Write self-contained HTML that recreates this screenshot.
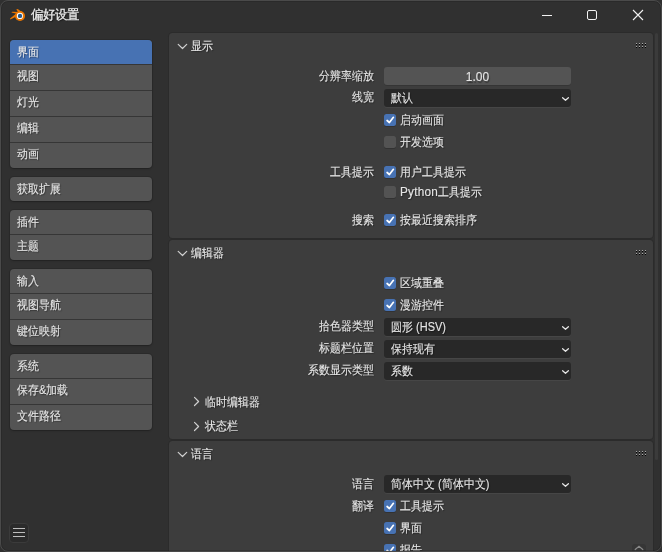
<!DOCTYPE html>
<html><head><meta charset="utf-8">
<style>
*{margin:0;padding:0;box-sizing:border-box}
html,body{width:662px;height:552px;overflow:hidden;background:#303030}
body{position:relative;-webkit-text-stroke:0.1px currentColor;font-family:"Liberation Sans",sans-serif;font-size:11px;line-height:13px;color:#e6e6e6}
#root{position:absolute;left:0;top:0;width:662px;height:552px;overflow:hidden;background:#303030;will-change:transform}
.a{position:absolute;white-space:nowrap}
.t{text-shadow:1px 1px 1px rgba(0,0,0,.45)}
#frame{position:absolute;left:0;top:0;width:662px;height:552px;border:1px solid #4a4a4a;border-radius:8px;pointer-events:none;box-shadow:inset 0 0 0 1px rgba(0,0,0,.12)}
.grp{position:absolute;left:10px;width:142px;background:#545454;border-radius:4px;overflow:hidden;box-shadow:0 0 0 1px rgba(0,0,0,.1),0 1px 2px rgba(0,0,0,.22)}
.sep{position:absolute;left:0;width:142px;height:1px;background:#363636}
.nt{position:absolute;left:7px;transform:scaleY(1.1);white-space:nowrap;color:#e6e6e6;text-shadow:1px 1px 1px rgba(0,0,0,.4)}
.panel{position:absolute;left:169px;width:484px;background:#3d3d3d;border-radius:3.5px;overflow:hidden;box-shadow:0 0 0 1px rgba(0,0,0,.1)}
.hdr{position:absolute;left:22px;transform:scaleY(1.1);white-space:nowrap;color:#e6e6e6;text-shadow:1px 1px 1px rgba(0,0,0,.4)}
.lbl{position:absolute;right:279px;transform:scaleY(1.1);text-align:right;white-space:nowrap;color:#e6e6e6;text-shadow:1px 1px 1px rgba(0,0,0,.4)}
.num{position:absolute;left:215px;width:187px;height:18px;background:#545454;border-radius:3px;box-shadow:0 1px 0 rgba(0,0,0,.12)}
.dd{position:absolute;left:215px;width:187px;height:18px;background:#282828;border-radius:3px;box-shadow:0 1px 0 #464646}
.dd .a,.num .a{transform:scaleY(1.1);text-shadow:1px 1px 1px rgba(0,0,0,.4)}
.cb{position:absolute;left:215px;width:12px;height:12px;background:#535353;border-radius:2.5px;box-shadow:0 1px 0 rgba(0,0,0,.18)}
.cb.on{background:#4772b3}
.ct{position:absolute;left:231px;transform:scaleY(1.1);white-space:nowrap;color:#e6e6e6;text-shadow:1px 1px 1px rgba(0,0,0,.4)}
</style></head><body><div id="root">

<svg class="a" style="left:7px;top:6px" width="20" height="18" viewBox="0 0 20 18">
  <g fill="#ea7600">
    <circle cx="13" cy="10" r="5"/>
    <path d="M9.3 3.6 Q10 2.6 11 3.3 L15.2 6.3 L12.6 8 Z"/>
    <path d="M4.6 6.6 Q4.2 5.6 5.6 5.7 L12.5 5.9 L12 8.2 Z"/>
    <path d="M3.3 13.5 Q2.6 12.3 3.7 11.9 L9.6 7.2 L11.5 9.4 L4.3 13.1 Z"/>
  </g>
  <circle cx="12.9" cy="9.9" r="3.1" fill="#ffffff"/>
  <circle cx="13" cy="9.9" r="2.2" fill="#285a8c"/>
</svg>
<div class="a t" style="left:31px;top:8px;transform:scaleY(1.05);-webkit-text-stroke:0.25px #ededed;font-size:12px;line-height:14px;color:#ededed">偏好设置</div>
<div class="a" style="left:542px;top:15px;width:10px;height:1px;background:#f2f2f2"></div>
<div class="a" style="left:587px;top:10px;width:10px;height:10px;border:1px solid #f2f2f2;border-radius:2px"></div>
<svg class="a" style="left:632px;top:9px" width="12" height="12" viewBox="0 0 12 12"><path d="M1 1 L11 11 M11 1 L1 11" stroke="#f2f2f2" stroke-width="1.1"/></svg>

<div class="grp" style="top:40px;height:128px"><div class="a" style="left:0;top:0;width:142px;height:24px;background:#4772b3"></div><div class="sep" style="top:24px"></div><div class="sep" style="top:50px"></div><div class="sep" style="top:76px"></div><div class="sep" style="top:102px"></div><div class="nt" style="top:5.5px">界面</div><div class="nt" style="top:30.3px">视图</div><div class="nt" style="top:56.3px">灯光</div><div class="nt" style="top:82.3px">编辑</div><div class="nt" style="top:108.3px">动画</div></div>
<div class="grp" style="top:177px;height:24px"><div class="nt" style="top:5.5px">获取扩展</div></div>
<div class="grp" style="top:210px;height:50px"><div class="sep" style="top:24px"></div><div class="nt" style="top:5.5px">插件</div><div class="nt" style="top:30.3px">主题</div></div>
<div class="grp" style="top:269px;height:76px"><div class="sep" style="top:24px"></div><div class="sep" style="top:50px"></div><div class="nt" style="top:5.5px">输入</div><div class="nt" style="top:30.3px">视图导航</div><div class="nt" style="top:56.3px">键位映射</div></div>
<div class="grp" style="top:354px;height:76px"><div class="sep" style="top:24px"></div><div class="sep" style="top:50px"></div><div class="nt" style="top:5.5px">系统</div><div class="nt" style="top:30.3px">保存&amp;加载</div><div class="nt" style="top:56.3px">文件路径</div></div>
<div class="a" style="left:9px;top:523px;width:19.5px;height:19.5px;background:#2b2b2b;border:1px solid #3b3b3b;border-radius:4px"></div>
<div class="a" style="left:13px;top:528px;width:12px;height:1.3px;background:#bdbdbd"></div>
<div class="a" style="left:13px;top:532px;width:12px;height:1.3px;background:#bdbdbd"></div>
<div class="a" style="left:13px;top:536px;width:12px;height:1.3px;background:#bdbdbd"></div>

<div class="a" style="left:655px;top:33px;width:3px;height:427px;background:#3b3b3b;border-radius:1.5px"></div>
<div class="panel" style="top:33px;height:205px"><svg class="a" style="left:0;top:0" width="24" height="24" viewBox="0 0 24 24"><path d="M9.2 11.4 L13.5 15.5 L17.7 11.4" fill="none" stroke="#cfcfcf" stroke-width="1.2" stroke-linecap="round" stroke-linejoin="round"/></svg><div class="hdr" style="top:6.5px">显示</div><div class="a" style="left:467px;top:10px;width:1px;height:1px;background:#a8a8a8"></div><div class="a" style="left:467px;top:11px;width:1px;height:1px;background:#000"></div><div class="a" style="left:467px;top:13px;width:1px;height:1px;background:#a8a8a8"></div><div class="a" style="left:467px;top:14px;width:1px;height:1px;background:#000"></div><div class="a" style="left:470px;top:10px;width:1px;height:1px;background:#a8a8a8"></div><div class="a" style="left:470px;top:11px;width:1px;height:1px;background:#000"></div><div class="a" style="left:470px;top:13px;width:1px;height:1px;background:#a8a8a8"></div><div class="a" style="left:470px;top:14px;width:1px;height:1px;background:#000"></div><div class="a" style="left:473px;top:10px;width:1px;height:1px;background:#a8a8a8"></div><div class="a" style="left:473px;top:11px;width:1px;height:1px;background:#000"></div><div class="a" style="left:473px;top:13px;width:1px;height:1px;background:#a8a8a8"></div><div class="a" style="left:473px;top:14px;width:1px;height:1px;background:#000"></div><div class="a" style="left:476px;top:10px;width:1px;height:1px;background:#a8a8a8"></div><div class="a" style="left:476px;top:11px;width:1px;height:1px;background:#000"></div><div class="a" style="left:476px;top:13px;width:1px;height:1px;background:#a8a8a8"></div><div class="a" style="left:476px;top:14px;width:1px;height:1px;background:#000"></div><div class="lbl" style="top:36.5px">分辨率缩放</div><div class="num" style="top:34px"><div class="a" style="left:0;width:187px;text-align:center;top:3px;font-size:12px;line-height:14px">1.00</div></div><div class="lbl" style="top:58px">线宽</div><div class="dd" style="top:56px"><div class="a" style="left:7px;top:2.5px">默认</div><svg width="10" height="8" viewBox="0 0 10 8" style="position:absolute;left:176px;top:6px"><path d="M2.6 2.7 L5.5 5.3 L8.4 2.7" fill="none" stroke="#e6e6e6" stroke-width="1.25" stroke-linecap="round" stroke-linejoin="round"/></svg></div><div class="cb on" style="top:81px"><svg width="12" height="12" viewBox="0 0 12 12" style="position:absolute;left:0;top:0"><path d="M3.1 6.5 L5.4 8.5 L9.4 3.3" fill="none" stroke="#fff" stroke-width="1.7" stroke-linecap="round" stroke-linejoin="round"/></svg></div><div class="ct" style="top:81px">启动画面</div><div class="cb" style="top:103px"></div><div class="ct" style="top:103px">开发选项</div><div class="lbl" style="top:133px">工具提示</div><div class="cb on" style="top:133px"><svg width="12" height="12" viewBox="0 0 12 12" style="position:absolute;left:0;top:0"><path d="M3.1 6.5 L5.4 8.5 L9.4 3.3" fill="none" stroke="#fff" stroke-width="1.7" stroke-linecap="round" stroke-linejoin="round"/></svg></div><div class="ct" style="top:133px">用户工具提示</div><div class="cb" style="top:153px"></div><div class="ct" style="top:153px"><span style="font-size:11.8px;letter-spacing:0.2px">Python</span>工具提示</div><div class="lbl" style="top:181px">搜索</div><div class="cb on" style="top:181px"><svg width="12" height="12" viewBox="0 0 12 12" style="position:absolute;left:0;top:0"><path d="M3.1 6.5 L5.4 8.5 L9.4 3.3" fill="none" stroke="#fff" stroke-width="1.7" stroke-linecap="round" stroke-linejoin="round"/></svg></div><div class="ct" style="top:181px">按最近搜索排序</div></div>
<div class="panel" style="top:240px;height:199px"><svg class="a" style="left:0;top:0" width="24" height="24" viewBox="0 0 24 24"><path d="M9.2 11.4 L13.5 15.5 L17.7 11.4" fill="none" stroke="#cfcfcf" stroke-width="1.2" stroke-linecap="round" stroke-linejoin="round"/></svg><div class="hdr" style="top:6.5px">编辑器</div><div class="a" style="left:467px;top:10px;width:1px;height:1px;background:#a8a8a8"></div><div class="a" style="left:467px;top:11px;width:1px;height:1px;background:#000"></div><div class="a" style="left:467px;top:13px;width:1px;height:1px;background:#a8a8a8"></div><div class="a" style="left:467px;top:14px;width:1px;height:1px;background:#000"></div><div class="a" style="left:470px;top:10px;width:1px;height:1px;background:#a8a8a8"></div><div class="a" style="left:470px;top:11px;width:1px;height:1px;background:#000"></div><div class="a" style="left:470px;top:13px;width:1px;height:1px;background:#a8a8a8"></div><div class="a" style="left:470px;top:14px;width:1px;height:1px;background:#000"></div><div class="a" style="left:473px;top:10px;width:1px;height:1px;background:#a8a8a8"></div><div class="a" style="left:473px;top:11px;width:1px;height:1px;background:#000"></div><div class="a" style="left:473px;top:13px;width:1px;height:1px;background:#a8a8a8"></div><div class="a" style="left:473px;top:14px;width:1px;height:1px;background:#000"></div><div class="a" style="left:476px;top:10px;width:1px;height:1px;background:#a8a8a8"></div><div class="a" style="left:476px;top:11px;width:1px;height:1px;background:#000"></div><div class="a" style="left:476px;top:13px;width:1px;height:1px;background:#a8a8a8"></div><div class="a" style="left:476px;top:14px;width:1px;height:1px;background:#000"></div><div class="cb on" style="top:37px"><svg width="12" height="12" viewBox="0 0 12 12" style="position:absolute;left:0;top:0"><path d="M3.1 6.5 L5.4 8.5 L9.4 3.3" fill="none" stroke="#fff" stroke-width="1.7" stroke-linecap="round" stroke-linejoin="round"/></svg></div><div class="ct" style="top:37px">区域重叠</div><div class="cb on" style="top:59px"><svg width="12" height="12" viewBox="0 0 12 12" style="position:absolute;left:0;top:0"><path d="M3.1 6.5 L5.4 8.5 L9.4 3.3" fill="none" stroke="#fff" stroke-width="1.7" stroke-linecap="round" stroke-linejoin="round"/></svg></div><div class="ct" style="top:59px">漫游控件</div><div class="lbl" style="top:80px">拾色器类型</div><div class="dd" style="top:78px"><div class="a" style="left:7px;top:2.5px">圆形 (HSV)</div><svg width="10" height="8" viewBox="0 0 10 8" style="position:absolute;left:176px;top:6px"><path d="M2.6 2.7 L5.5 5.3 L8.4 2.7" fill="none" stroke="#e6e6e6" stroke-width="1.25" stroke-linecap="round" stroke-linejoin="round"/></svg></div><div class="lbl" style="top:102px">标题栏位置</div><div class="dd" style="top:100px"><div class="a" style="left:7px;top:2.5px">保持现有</div><svg width="10" height="8" viewBox="0 0 10 8" style="position:absolute;left:176px;top:6px"><path d="M2.6 2.7 L5.5 5.3 L8.4 2.7" fill="none" stroke="#e6e6e6" stroke-width="1.25" stroke-linecap="round" stroke-linejoin="round"/></svg></div><div class="lbl" style="top:124px">系数显示类型</div><div class="dd" style="top:122px"><div class="a" style="left:7px;top:2.5px">系数</div><svg width="10" height="8" viewBox="0 0 10 8" style="position:absolute;left:176px;top:6px"><path d="M2.6 2.7 L5.5 5.3 L8.4 2.7" fill="none" stroke="#e6e6e6" stroke-width="1.25" stroke-linecap="round" stroke-linejoin="round"/></svg></div><svg class="a" style="left:0;top:154px" width="40" height="20" viewBox="0 0 40 20"><path d="M25.5 3.4 L29.6 7.5 L25.5 11.5" fill="none" stroke="#cfcfcf" stroke-width="1.2" stroke-linecap="round" stroke-linejoin="round"/></svg><div class="hdr" style="left:36px;top:155.5px">临时编辑器</div><svg class="a" style="left:0;top:179px" width="40" height="20" viewBox="0 0 40 20"><path d="M25.5 3.4 L29.6 7.5 L25.5 11.5" fill="none" stroke="#cfcfcf" stroke-width="1.2" stroke-linecap="round" stroke-linejoin="round"/></svg><div class="hdr" style="left:36px;top:179.8px">状态栏</div></div>
<div class="panel" style="top:441px;height:140px"><svg class="a" style="left:0;top:0" width="24" height="24" viewBox="0 0 24 24"><path d="M9.2 11.4 L13.5 15.5 L17.7 11.4" fill="none" stroke="#cfcfcf" stroke-width="1.2" stroke-linecap="round" stroke-linejoin="round"/></svg><div class="hdr" style="top:6.5px">语言</div><div class="a" style="left:467px;top:10px;width:1px;height:1px;background:#a8a8a8"></div><div class="a" style="left:467px;top:11px;width:1px;height:1px;background:#000"></div><div class="a" style="left:467px;top:13px;width:1px;height:1px;background:#a8a8a8"></div><div class="a" style="left:467px;top:14px;width:1px;height:1px;background:#000"></div><div class="a" style="left:470px;top:10px;width:1px;height:1px;background:#a8a8a8"></div><div class="a" style="left:470px;top:11px;width:1px;height:1px;background:#000"></div><div class="a" style="left:470px;top:13px;width:1px;height:1px;background:#a8a8a8"></div><div class="a" style="left:470px;top:14px;width:1px;height:1px;background:#000"></div><div class="a" style="left:473px;top:10px;width:1px;height:1px;background:#a8a8a8"></div><div class="a" style="left:473px;top:11px;width:1px;height:1px;background:#000"></div><div class="a" style="left:473px;top:13px;width:1px;height:1px;background:#a8a8a8"></div><div class="a" style="left:473px;top:14px;width:1px;height:1px;background:#000"></div><div class="a" style="left:476px;top:10px;width:1px;height:1px;background:#a8a8a8"></div><div class="a" style="left:476px;top:11px;width:1px;height:1px;background:#000"></div><div class="a" style="left:476px;top:13px;width:1px;height:1px;background:#a8a8a8"></div><div class="a" style="left:476px;top:14px;width:1px;height:1px;background:#000"></div><div class="lbl" style="top:36.5px">语言</div><div class="dd" style="top:34px"><div class="a" style="left:7px;top:2.5px">简体中文 (简体中文)</div><svg width="10" height="8" viewBox="0 0 10 8" style="position:absolute;left:176px;top:6px"><path d="M2.6 2.7 L5.5 5.3 L8.4 2.7" fill="none" stroke="#e6e6e6" stroke-width="1.25" stroke-linecap="round" stroke-linejoin="round"/></svg></div><div class="lbl" style="top:59px">翻译</div><div class="cb on" style="top:59px"><svg width="12" height="12" viewBox="0 0 12 12" style="position:absolute;left:0;top:0"><path d="M3.1 6.5 L5.4 8.5 L9.4 3.3" fill="none" stroke="#fff" stroke-width="1.7" stroke-linecap="round" stroke-linejoin="round"/></svg></div><div class="ct" style="top:59px">工具提示</div><div class="cb on" style="top:81px"><svg width="12" height="12" viewBox="0 0 12 12" style="position:absolute;left:0;top:0"><path d="M3.1 6.5 L5.4 8.5 L9.4 3.3" fill="none" stroke="#fff" stroke-width="1.7" stroke-linecap="round" stroke-linejoin="round"/></svg></div><div class="ct" style="top:81px">界面</div><div class="cb on" style="top:103px"><svg width="12" height="12" viewBox="0 0 12 12" style="position:absolute;left:0;top:0"><path d="M3.1 6.5 L5.4 8.5 L9.4 3.3" fill="none" stroke="#fff" stroke-width="1.7" stroke-linecap="round" stroke-linejoin="round"/></svg></div><div class="ct" style="top:103px">报告</div></div>
<div class="a" style="left:632px;top:544px;width:14px;height:12px;background:#363636;border-radius:3px"></div>
<svg class="a" style="left:632px;top:543px" width="14" height="9" viewBox="0 0 14 9"><path d="M3.2 6.5 L7 3.2 L10.8 6.5" fill="none" stroke="#8a8a8a" stroke-width="1.2" stroke-linecap="round"/></svg>

<div id="frame"></div>
</div></body></html>
